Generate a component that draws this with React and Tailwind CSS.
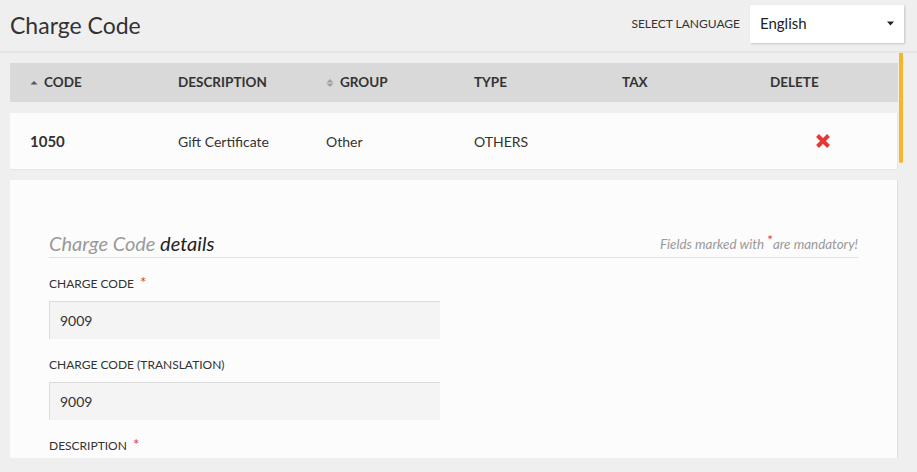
import React from "react";

const columns = [
  { label: "CODE", sort: "up" },
  { label: "DESCRIPTION" },
  { label: "GROUP", sort: "both" },
  { label: "TYPE" },
  { label: "TAX" },
  { label: "DELETE" },
];

const SortIcon = ({ kind }) => (
  <svg width="8" height="10" viewBox="0 0 8 10" className="mr-[6px]">
    {kind === "up" ? (
      <path d="M0.5 6.5 L4 3 L7.5 6.5 Z" fill="#555" />
    ) : (
      <>
        <path d="M0.5 4.5 L4 1 L7.5 4.5 Z" fill="#a0a0a0" />
        <path d="M0.5 5.5 L4 9 L7.5 5.5 Z" fill="#a0a0a0" />
      </>
    )}
  </svg>
);

const Field = ({ label, required, value }) => (
  <div className="mt-[17px]">
    <div className="flex items-start text-[12px] leading-[18px] text-[#333]">
      {label}
      {required && <span className="ml-[6px] text-[#e53935] text-[15px] leading-[14px]">*</span>}
    </div>
    {value !== undefined && (
      <div className="mt-[8px] w-[391px] h-[38px] flex items-center pl-[10px] bg-[#f4f4f4] border-t border-l border-[#dcdcdc] text-[14px] text-[#333]">
        {value}
      </div>
    )}
  </div>
);

export default function App() {
  return (
    <div
      className="w-full h-[472px] overflow-hidden bg-[#efefef] text-[#333]"
      style={{ fontFamily: "Lato, 'Open Sans', sans-serif" }}
    >
      {/* Top bar */}
      <div className="flex items-center justify-between h-[53px] pl-[10px] pr-[13px] border-b-2 border-[#e4e4e4]">
        <h1 className="text-[23px] text-[#333]">Charge Code</h1>
        <div className="flex items-center pb-[4px]">
          <span className="text-[12px] mr-[10px] text-[#333]">SELECT LANGUAGE</span>
          <div className="w-[154px] h-[38px] bg-white flex items-center justify-between pl-[10px] pr-[10px] shadow-[1px_1px_2px_rgba(0,0,0,0.18)]">
            <span className="text-[15px] text-[#222]">English</span>
            <svg width="7" height="5" viewBox="0 0 7 5">
              <path d="M0 0.5 L7 0.5 L3.5 4.5 Z" fill="#222" />
            </svg>
          </div>
        </div>
      </div>

      <div className="flex">
        <div className="w-[888px] ml-[10px] shrink-0">
          {/* Table header */}
          <div className="mt-[10px] h-[39px] bg-[#d9d9d9] flex items-center pl-[20px] text-[13.5px] font-bold text-[#333]">
            {columns.map((c) => (
              <div key={c.label} className="w-[148px] shrink-0 flex items-center">
                {c.sort && <SortIcon kind={c.sort} />}
                {c.label}
              </div>
            ))}
          </div>

          {/* Row */}
          <div className="mt-[11px] h-[57px] bg-[#fcfcfc] border-r border-b border-[#e6e6e6] flex items-center pl-[20px] text-[14px] text-[#333] overflow-hidden">
            <div className="w-[148px] shrink-0 font-bold text-[15px]">1050</div>
            <div className="w-[148px] shrink-0">Gift Certificate</div>
            <div className="w-[148px] shrink-0">Other</div>
            <div className="w-[148px] shrink-0">OTHERS</div>
            <div className="w-[148px] shrink-0"></div>
            <div className="w-[120px] shrink-0 pl-[45px]">
              <svg width="16" height="16" viewBox="0 0 16 16" className="block">
                <path d="M2.5 2.5 L13.5 13.5 M13.5 2.5 L2.5 13.5" stroke="#e53935" strokeWidth="4" />
              </svg>
            </div>
          </div>

          {/* Details card */}
          <div className="mt-[10px] h-[278px] bg-[#fcfcfc] border-r border-[#dedede] pl-[39px] pr-[39px] pt-[51px]">
            <div className="flex items-end justify-between border-b border-[#e0e0e0] pb-[2px]">
              <div className="text-[20px] leading-[24px] italic">
                <span className="text-[#9a9a9a]">Charge Code</span>{" "}
                <span className="text-[#222]">details</span>
              </div>
              <div className="text-[13.4px] italic text-[#999] pb-[1px]">
                Fields marked with <span className="text-[#e53935] not-italic relative -top-[4px]">*</span>are mandatory!
              </div>
            </div>
            <Field label="CHARGE CODE" required value="9009" />
            <Field label="CHARGE CODE (TRANSLATION)" value="9009" />
            <Field label="DESCRIPTION" required />
          </div>
        </div>

        {/* Scrollbar thumb */}
        <div className="ml-[1px] w-[4px] h-[110px] bg-[#f7b52b] rounded-b-[2px]"></div>
      </div>
    </div>
  );
}
